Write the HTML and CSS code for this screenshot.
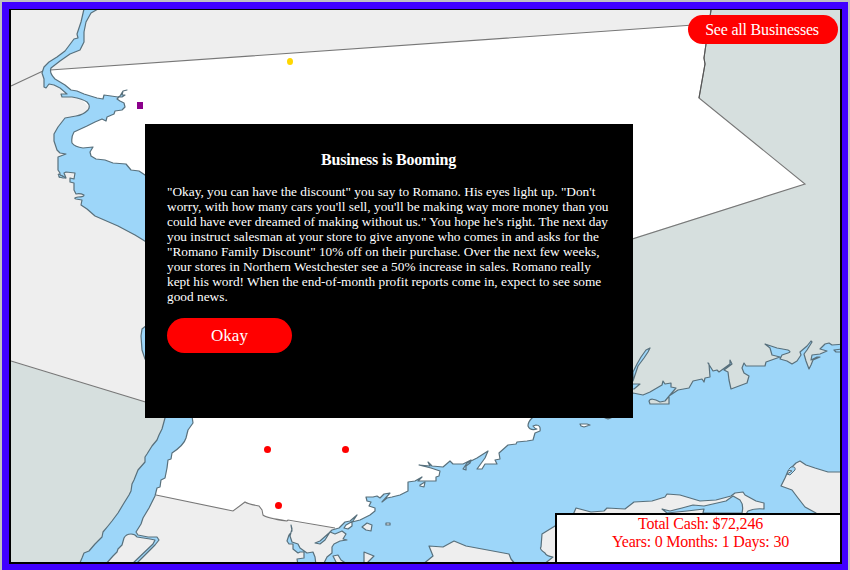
FILE: index.html
```
<!DOCTYPE html>
<html lang="en">
<head>
<meta charset="utf-8">
<title>Business Map</title>
<link rel="stylesheet" href="styles.css">
</head>
<body>
<main class="game">
  <svg class="map" viewBox="0 0 850 570" aria-hidden="true">
    <rect class="white" width="850" height="570"/>
    <path class="land" d="M0 0H712L708 24L50 70L48 74L62 92L80 98L90 108L70 125L63 140L80 170L145 230V403L0 358Z"/>
    <path class="border" d="M11 86L43 71M50 70L708 24"/>
    <path class="state" d="M0 358L175 411L145 480L90 570H0Z"/>
    <path class="border" d="M11 361L175 411"/>
    <path class="state" d="M860 0H711L706 44L704 58L705 64L699 98L805 184L633 238L560 262V430L640 420L860 370Z"/>
    <path class="border" d="M711 10L706 44L704 58L705 64L699 98L805 184L560 262"/>
    <path class="border strong" d="M711 10L706 44L704 58L705 64L699 98"/>
    <path class="land" d="M156 495L233 511L245 502L259 506L263 515L287 521L340 529L380 520V570H90Z"/>
    <path class="border" d="M156 495L233 511L245 502Q248 504 259 506L262 510L263 515Q266 518 287 521L288 520L335 528"/>
    <path class="water" d="M84 9L81 22L77 34L78 38L74 39L71 43L65 51L57 57L49 62L44 67L42 73L44 79L44 87L46 88L49 84L54 85L60 88L67 94L61 94L62 97L72 97Q83 99 87 102Q91 106 88 110Q83 115 76 116L65 118L58 127L54 134L54 141L57 150L60 153L66 154L58 157L58 170L60 173L59 177L63 178L66 178L64 173L66 172L75 173L74 179L70 178L70 182L74 183L74 190L76 194Q80 193 84 195Q84 197 78 197Q73 198 76 199L82 200L81 205L87 209L95 216L118 226L135 235Q145 241 149 244L160 290L147 325L142 329L141 336L142 350L145 359L165 390L165 418L162 429L159 435L157 440L152 446L147 454L145 457L145 462L138 470L134 480L132 484L131 491L129 495L124 503L118 513L112 521L108 526L103 532L102 537L95 544L89 551L84 553L82 558L79 565H105L113 556L117 552L118 549L122 545L124 538Q126 534 131 534Q135 534 137 537L150 539L155 540L153 544L131 565H135L155 545L159 540L157 537L148 537L138 535L136 532L141 524L143 518L149 508L155 496L157 488L160 487L161 480L165 478L167 468L168 460L171 459L172 453Q184 445 186 438L188 430L193 423L192 416L210 300L170 192L145 175L139 171L131 170L126 164L113 163L105 160L96 159L91 156L90 152L93 147L83 148Q75 147 72 143Q71 137 74 132L87 126L95 122L102 119L106 121L107 117L114 114L115 111L122 110L125 107L124 103L120 101L117 99L119 97L122 97L125 95L122 95L123 91L127 90L123 91L120 96L118 97L104 95L103 99L97 98L84 94L77 91L71 90L65 85L55 79Q49 73 51 68L60 61L70 54L80 50L84 42L84 32L86 22L91 13L98 9Z"/>
    <path class="lake" d="M60 178L58 174L63 176L66 178L60 175"/>
    <path class="water" d="M291 525L292 531L289 535L287 541L289 544L293 544L293 549L298 553L300 552L304 552L304 558L297 559L298 565H316L315 557L313 552L307 553L300 548L298 544L292 542L290 536L292 529Z"/>
    <path class="water" d="M323 565L327 557L332 553L332 547L334 544L340 541L347 540L343 539L346 534L342 531L335 534L330 532L325 540L320 544L315 543L320 541L329 533L332 530L339 528L345 522L350 521L357 515L353 521L346 525L344 528L348 529L352 526L352 522L360 520L370 515L375 511L375 508L369 506L371 502L367 501L366 497L373 497L377 496L380 498L384 494L390 493L382 502L387 498L392 497L400 495L408 491L408 482L415 481L422 477L418 481L427 481L436 481L436 477L439 476L440 471L431 468L419 465L430 466L428 462L432 466L443 467L450 461L453 464L463 464L471 460L470 463L466 466L466 470L463 469L467 463L477 458L488 451L485 458L477 469L482 469L485 464L497 464L495 460L500 459L499 453L508 445L516 444L517 442L527 441L533 440L535 433L540 431Q541 425 536 425L533 426Q535 429 537 429Q530 431 528 426Q528 422 532 418L570 400L633 393L643 395L650 392L662 385L663 381L665 384L671 383L671 387L676 388L670 395L665 401L660 402Q651 397 649 401L650 404L669 404L669 396L678 390L689 388L693 381L702 379L704 382L705 378L710 377L709 364L708 363L713 371L717 370L719 372L730 364L730 360L732 364L724 370L728 372L729 380L731 389L747 383L749 376L744 373L742 368L744 363L746 366L765 366L766 362L780 357L772 355L770 348L765 344L777 348L788 350Q792 352 788 353L782 355L780 359L787 361L792 364L797 361L801 355L800 352L807 346L811 341L812 342L807 350L804 354L806 361L809 369L811 365L813 360L820 357L817 357L811 360L812 355L820 354L827 351L820 349L825 344L829 343L832 345L845 344V570H323Z"/>
    <path class="water" d="M633 381V372L637 364L641 357L646 350L650 348L648 352L644 358L638 366ZM630 384L640 384L634 389H630ZM834 350L842 349V352H836Z"/>
    <g class="land outline">
      <path d="M333 556L338 555L341 560L347 564H337ZM362 527L367 523L372 525L371 531L366 530ZM386 523L390 523V525L386 525ZM364 552L374 556L367 563H364Z"/>
      <path d="M422 565L433 556L429 546L443 547L454 541L466 546L509 554L511 559L516 565Z"/>
      <path d="M543 565L553 557Q546 556 545 553Q539 549 541 547L542 534L555 526L573 515L576 508L591 512L604 511L607 508L625 509L634 502L652 501L665 497L667 494L680 495L700 501L716 500L731 496L735 493L743 492L745 495L756 501L764 503L764 509Q755 508 748 511L746 514H560V565Z"/>
      <path class="water" d="M662 509L670 511L682 508L693 505L704 506L726 501L733 496L740 500Q744 505 742 513H703L704 509L687 511L667 513Z"/>
      <path d="M781 486L785 478L788 471L796 463L800 461L806 465L815 468L828 472H842V570L816 513L805 507L798 498L792 490Z"/>
      <path class="white" d="M580 424L587 424L590 425L584 427L581 426ZM605 418L608 419L611 418ZM420 485L425 482L424 487L420 486Z"/>
      <path class="lake" d="M788 470L792 471L787 474L790 475L795 470Q796 466 791 467L789 469"/>
    </g>
  </svg>
  <div class="frame"></div>
  <div class="pins">
    <i class="pin home"></i>
    <i class="pin gold"></i>
    <i class="pin store-a"></i>
    <i class="pin store-b"></i>
    <i class="pin store-c"></i>
  </div>
  <button class="all-businesses">See all Businesses</button>
  <section class="dialog">
    <h1>Business is Booming</h1>
    <p>"Okay, you can have the discount" you say to Romano. His eyes light up. "Don't<br>
    worry, with how many cars you'll sell, you'll be making way more money than you<br>
    could have ever dreamed of making without us." You hope he's right. The next day<br>
    you instruct salesman at your store to give anyone who comes in and asks for the<br>
    "Romano Family Discount" 10% off on their purchase. Over the next few weeks,<br>
    your stores in Northern Westchester see a 50% increase in sales. Romano really<br>
    kept his word! When the end-of-month profit reports come in, expect to see some<br>
    good news.</p>
    <button class="okay">Okay</button>
  </section>
  <aside class="status">
    <div>Total Cash: $72,246</div>
    <div>Years: 0 Months: 1 Days: 30</div>
  </aside>
</main>
</body>
</html>
```
FILE: styles.css
```
* { box-sizing: border-box; }
body { margin: 0; font-family: "Liberation Serif", serif; }
.game { position: relative; width: 850px; height: 570px; overflow: hidden; }
.map { display: block; width: 850px; height: 570px; }
.white { fill: #fff; }
.land { fill: #eee; }
.state { fill: #d6dfde; }
.border { fill: none; stroke: #777; stroke-width: 1.1; }
.strong { stroke: #555; }
.water { fill: #9dd6f9; stroke: #58707c; stroke-width: 1.2; stroke-linejoin: round; }
.outline { stroke: #58707c; stroke-width: 1.2; stroke-linejoin: round; }
.lake { fill: #9dd6f9; stroke: #58707c; stroke-width: 1; }
.frame {
  position: absolute; inset: 0;
  border: 2px solid #c0c0c0; border-bottom: 0;
}
.frame::before {
  content: ""; position: absolute; inset: 0;
  border: solid #4000ff; border-width: 7px 6px 6px 7px;
}
.frame::after {
  content: ""; position: absolute; inset: 7px 6px 6px 7px;
  border: solid #000; border-width: 1px 2px 2px 2px;
}
.pin { position: absolute; width: 7px; height: 7px; border-radius: 50%; background: #f00; }
.home { left: 137px; top: 102px; width: 6px; border-radius: 0; background: #8b008b; }
.gold { left: 287px; top: 58px; width: 6px; background: #ffd700; }
.store-a { left: 264px; top: 446px; }
.store-b { left: 342px; top: 446px; }
.store-c { left: 275px; top: 502px; }
button { border: 0; background: #f00; color: #fff; font-family: inherit; padding: 0; }
.all-businesses {
  position: absolute; left: 688px; top: 15px; width: 150px; height: 29px;
  border-radius: 15px; font-size: 16px; letter-spacing: -0.2px; padding-right: 2px;
}
.dialog {
  position: absolute; left: 145px; top: 124px; width: 488px; height: 294px;
  padding: 27px 23px 0 22px; background: #000; color: #fff;
}
h1 { margin: 0 0 15px; font-size: 16px; line-height: 18px; letter-spacing: -0.2px; text-align: center; }
.dialog p { margin: 0 0 14px; font-size: 13.333px; line-height: 15px; white-space: nowrap; }
.okay { display: block; width: 125px; height: 35px; border-radius: 18px; font-size: 17px; }
.status {
  position: absolute; left: 555px; top: 513px; width: 287px; height: 51px;
  border: 2px solid #000; background: #fff; color: #f00;
  text-align: center; font-size: 16px; line-height: 18px; letter-spacing: -0.22px; padding-left: 4px;
}
```
